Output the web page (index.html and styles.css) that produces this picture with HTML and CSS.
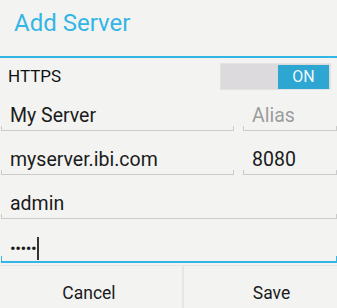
FILE: index.html
```html
<!DOCTYPE html>
<html>
<head>
<meta charset="utf-8">
<link rel="stylesheet" href="styles.css">
</head>
<body>
<div class="dialog">
  <div class="title">Add Server</div>
  <div class="row-switch">
    <span class="label">HTTPS</span>
    <div class="toggle"><span class="on">ON</span></div>
  </div>
  <div class="fields">
    <div class="line">
      <div class="field grow"><span>My Server</span></div>
      <div class="field side"><span class="hint">Alias</span></div>
    </div>
    <div class="line">
      <div class="field grow"><span>myserver.ibi.com</span></div>
      <div class="field side"><span>8080</span></div>
    </div>
    <div class="line">
      <div class="field grow"><span>admin</span></div>
    </div>
    <div class="line">
      <div class="field grow focused"><span class="dots">•••••</span><i class="cursor"></i></div>
    </div>
  </div>
  <div class="buttons">
    <div class="btn cancel">Cancel</div>
    <div class="btn save">Save</div>
  </div>
</div>
</body>
</html>
```
FILE: styles.css
```css
html, body {
  margin: 0;
  padding: 0;
  background: #f3f4f2;
}
body {
  font-family: Roboto, "Noto Sans", sans-serif;
  color: #1b1b1b;
  width: 337px;
  height: 308px;
  overflow: hidden;
}
.dialog {
  display: flex;
  flex-direction: column;
}
.title {
  height: 58px;
  box-sizing: border-box;
  padding: 8px 0 0 14px;
  font-size: 24px;
  line-height: 30px;
  color: #33b5e5;
  border-bottom: 2px solid #33b5e5;
}
.row-switch {
  height: 32px;
  display: flex;
  align-items: center;
  justify-content: space-between;
  padding: 0 6px 0 8px;
}
.label {
  font-size: 17px;
  color: #111;
  margin-top: 4px;
}
.toggle {
  width: 108px;
  height: 24px;
  background: #dcdadc;
  border: 1px solid #e4e3e4;
  display: flex;
  justify-content: flex-end;
  align-items: stretch;
  padding: 1px 1px 0 0;
  margin-top: 4px;
}
.on {
  width: 51px;
  background: #2da6d2;
  color: #eef8fc;
  font-size: 16px;
  display: flex;
  align-items: center;
  justify-content: center;
}
.fields {
  display: flex;
  flex-direction: column;
  margin-top: -3px;
}
.line {
  display: flex;
  height: 44px;
  gap: 9px;
  padding-left: 1px;
}
.field {
  position: relative;
  display: flex;
  align-items: flex-end;
  box-sizing: border-box;
  padding: 0 0 4px 9px;
  border-bottom: 1px solid #cbcbcb;
  font-size: 19.5px;
  line-height: 20px;
}
.field::before, .field::after {
  content: "";
  position: absolute;
  bottom: 0;
  width: 1px;
  height: 4px;
  background: #cbcbcb;
}
.field::before { left: 0; }
.field::after { right: 0; }
.grow { flex: 1; }
.side { width: 94px; }
.hint { color: #9c9c9c; }
.focused {
  border-bottom: 2px solid #33b5e5;
  padding-bottom: 3px;
}
.focused::before, .focused::after {
  background: #33b5e5;
  height: 5px;
}
.dots {
  letter-spacing: -0.5px;
  font-size: 17px;
}
.cursor {
  display: block;
  width: 2px;
  height: 23px;
  background: #333;
  margin: 0 0 -2px 1px;
}
.buttons {
  display: flex;
  height: 46px;
  margin-top: 2px;
  border-top: 1px solid #e6e6e4;
}
.btn {
  display: flex;
  align-items: center;
  justify-content: center;
  font-size: 17.5px;
  color: #1b1b1b;
  padding-top: 7px;
}
.cancel {
  width: 184px;
  padding-right: 4px;
  box-sizing: border-box;
  border-right: 2px solid #e6e6e4;
}
.save {
  flex: 1;
  padding-left: 22px;
}
```
